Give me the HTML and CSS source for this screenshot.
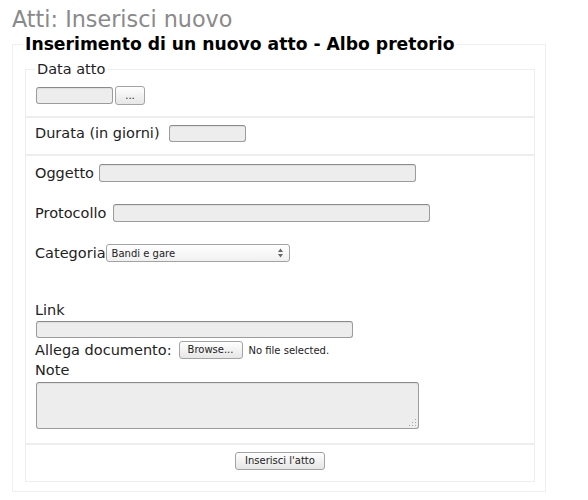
FILE: index.html
```html
<!DOCTYPE html>
<html lang="it">
<head>
<meta charset="utf-8">
<title>Atti: Inserisci nuovo</title>
<link rel="stylesheet" href="styles.css">
</head>
<body>
<h1 class="title">Atti: Inserisci nuovo</h1>
<form class="form">
  <fieldset class="main">
    <legend class="main-legend">Inserimento di un nuovo atto - Albo pretorio</legend>

    <fieldset class="box box-date">
      <legend class="box-legend">Data atto</legend>
      <div class="row row-date">
        <input class="field field-date" type="text">
        <button type="button" class="btn btn-dots">...</button>
      </div>
    </fieldset>

    <fieldset class="box box-duration">
      <div class="row row-17">
        <label class="label">Durata (in giorni)</label>
        <input class="field field-short gap-9" type="text">
      </div>
    </fieldset>

    <fieldset class="box box-details">
      <div class="row row-18">
        <label class="label">Oggetto</label>
        <input class="field field-long gap-5" type="text">
      </div>
      <div class="row row-18 mt-22">
        <label class="label">Protocollo</label>
        <input class="field field-long gap-7" type="text">
      </div>
      <div class="row row-18 mt-22">
        <label class="label">Categoria</label>
        <div class="select">
          <span class="select-text">Bandi e gare</span>
          <svg class="select-arrows" width="7" height="10" viewBox="0 0 7 10">
            <path d="M3.5 0.5 L6 4 L1 4 Z" fill="#666"/>
            <path d="M1 6 L6 6 L3.5 9.5 Z" fill="#666"/>
          </svg>
        </div>
      </div>
      <label class="label block mt-40">Link</label>
      <input class="field field-link mt-2" type="text">
      <div class="row row-18 mt-3">
        <label class="label">Allega documento:</label>
        <button type="button" class="btn btn-browse gap-7">Browse...</button>
        <span class="file-status">No file selected.</span>
      </div>
      <label class="label block mt-3">Note</label>
      <div class="note-wrap">
        <textarea class="field field-note"></textarea>
        <svg class="grip" width="10" height="10" viewBox="0 0 10 10">
          <rect x="8" y="2" width="1" height="1" fill="#aaa"/>
          <rect x="5" y="5" width="1" height="1" fill="#aaa"/>
          <rect x="8" y="5" width="1" height="1" fill="#aaa"/>
          <rect x="2" y="8" width="1" height="1" fill="#aaa"/>
          <rect x="5" y="8" width="1" height="1" fill="#aaa"/>
          <rect x="8" y="8" width="1" height="1" fill="#aaa"/>
        </svg>
      </div>
    </fieldset>

    <fieldset class="box box-submit">
      <div class="submit-row">
        <button type="button" class="btn btn-submit">Inserisci l'atto</button>
      </div>
    </fieldset>
  </fieldset>
</form>
</body>
</html>
```

FILE: styles.css
```css
html, body {
  margin: 0;
  padding: 0;
  background: #ffffff;
}

body {
  font-family: "DejaVu Sans", Verdana, sans-serif;
  color: #222222;
}

.title {
  margin: 6px 0 2px 12px;
  font-size: 22.3px;
  line-height: 26px;
  font-weight: normal;
  color: #8a8a8a;
}

.form {
  margin: 0;
}

.main {
  margin: 0 0 0 12px;
  width: 510px;
  padding: 7px 10px 9px 12px;
  border: 1px solid #efefef;
  min-inline-size: 0;
}

.main-legend {
  margin-left: -2px;
  padding: 0 2px;
  font-size: 17.2px;
  line-height: 20px;
  font-weight: bold;
  color: #000000;
}

.box {
  margin: 0;
  border: 1px solid #eeeeee;
  min-inline-size: 0;
}

.box-legend {
  margin-left: -1px;
  padding: 0 2px;
  font-size: 14.5px;
  line-height: 17px;
  color: #222222;
}

.box-date {
  padding: 8px 10px 11px 10px;
}

.box-duration {
  padding: 7px 10px 12px 9px;
}

.box-details {
  padding: 8px 10px 14px 9px;
}

.box-submit {
  padding: 7px 10px 11px 10px;
}

.row {
  display: flex;
  align-items: center;
}

.row-date {
  height: 19px;
}

.row-17 {
  height: 17px;
}

.row-18 {
  height: 18px;
}

.label {
  font-size: 14.5px;
  line-height: 17px;
  color: #222222;
  white-space: nowrap;
}

.block {
  display: block;
}

.field {
  appearance: none;
  box-sizing: border-box;
  margin: 0;
  padding: 0 4px;
  background: #ededed;
  border: 1px solid #9c9c9c;
  border-top-color: #8a8a8a;
  border-radius: 3px;
  box-shadow: inset 0 1px 1px rgba(0, 0, 0, 0.06);
  font-family: "DejaVu Sans", sans-serif;
  font-size: 10px;
  outline: none;
}

.field-date {
  width: 77px;
  height: 17px;
}

.field-short {
  width: 77px;
  height: 17px;
}

.field-long {
  width: 317px;
  height: 18px;
}

.field-link {
  display: block;
  width: 317px;
  height: 17px;
  margin-left: 1px;
}

.note-wrap {
  position: relative;
  width: 383px;
  height: 47px;
  margin-top: 3px;
  margin-left: 1px;
}

.field-note {
  display: block;
  width: 383px;
  height: 47px;
  resize: none;
}

.grip {
  position: absolute;
  right: 2px;
  bottom: 2px;
}

.btn {
  appearance: none;
  box-sizing: border-box;
  margin: 0;
  padding: 0;
  background: linear-gradient(#fefefe, #e6e6e6);
  border: 1px solid #a3a3a3;
  border-radius: 3px;
  font-family: "DejaVu Sans", sans-serif;
  font-size: 10px;
  line-height: 12px;
  color: #222222;
}

.btn-dots {
  width: 30px;
  height: 19px;
  margin-left: 2px;
}

.btn-browse {
  width: 64px;
  height: 18px;
}

.file-status {
  margin-left: 6px;
  font-size: 10px;
  color: #222222;
  white-space: nowrap;
}

.select {
  box-sizing: border-box;
  width: 184px;
  height: 18px;
  display: flex;
  align-items: center;
  justify-content: space-between;
  padding: 0 5px 0 5px;
  background: linear-gradient(#ffffff, #f0f0f0);
  border: 1px solid #a3a3a3;
  border-radius: 3px;
}

.select-text {
  font-size: 10px;
  color: #222222;
}

.select-arrows {
  display: block;
}

.submit-row {
  display: flex;
  justify-content: center;
}

.btn-submit {
  width: 90px;
  height: 18px;
}

/* spacing utilities last so they win over component margins */
.mt-2 { margin-top: 2px; }
.mt-3 { margin-top: 3px; }
.mt-22 { margin-top: 22px; }
.mt-40 { margin-top: 40px; }

.gap-5 { margin-left: 5px; }
.gap-7 { margin-left: 7px; }
.gap-9 { margin-left: 9px; }
```
